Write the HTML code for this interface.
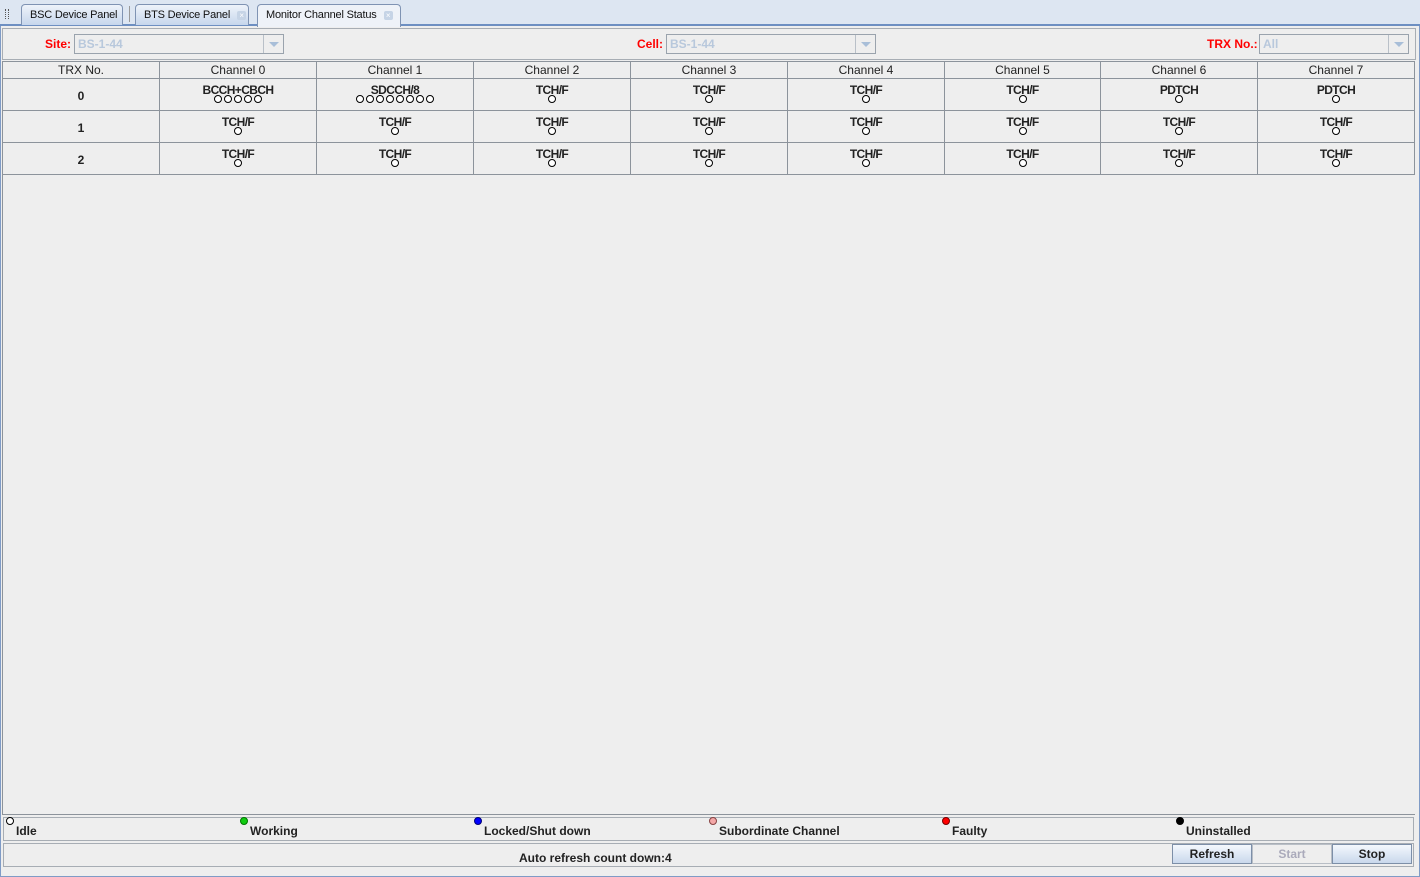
<!DOCTYPE html>
<html><head><meta charset="utf-8"><style>
*{margin:0;padding:0;box-sizing:border-box}
body{width:1420px;height:877px;background:#eeeeee;font-family:"Liberation Sans",Arial,sans-serif;font-size:12px;color:#222;position:relative;overflow:hidden}
.a{position:absolute}
.tabbar{left:0;top:0;width:1420px;height:26px;background:#dde6f2;border-bottom:2px solid #6d8fc2}
.tab{top:4px;height:21px;border:1px solid #7f93b3;border-bottom:none;border-radius:4px 4px 0 0;background:linear-gradient(#eef3fa,#c6d6ec);font-size:11px;padding:4px 0 0 8px;color:#111;white-space:nowrap;letter-spacing:-0.2px}
.x{display:inline-block;width:9px;height:9px;margin-left:7px;background:#c6d4e6;border-radius:2px;color:#fff;font-size:8px;line-height:9px;text-align:center;vertical-align:0}
.lbl{color:#f00;font-weight:bold;font-size:12px}
.cb{height:20px;border:1px solid #9aa3ad;background:#eeeeee;color:#b8c8dc;font-weight:bold;font-size:12px;padding:2px 3px}
.cb i{position:absolute;right:0;top:0;width:20px;height:18px;border-left:1px solid #b9c0c8}
.cb i:after{content:"";position:absolute;left:5px;top:7px;border-left:5px solid transparent;border-right:5px solid transparent;border-top:5px solid #a8bed8}
.c{position:absolute;border-right:1px solid #8c939b;border-bottom:1px solid #8c939b;text-align:center}
.h{font-size:12px;line-height:17px}
.t{position:absolute;left:0;right:0;top:4px;font-size:12px;font-weight:bold;line-height:14px;letter-spacing:-0.6px}
.d{position:absolute;top:16px;left:0;right:0;font-size:0;line-height:0}
.d b{display:inline-block;width:8px;height:8px;border:1px solid #000;border-radius:50%;background:#fff;margin:0 1px}
.n{font-weight:bold;line-height:34px;font-size:12px}
.leg{font-weight:bold;font-size:12px}
.leg b{position:absolute;left:-10px;top:-7px;width:8px;height:8px;border-radius:50%;border:1px solid #000}
.btn{top:844px;height:20px;border:1px solid #7d8fa8;background:linear-gradient(#f4f8fd,#c9d8ec);font-weight:bold;text-align:center;line-height:18px;font-size:12px}
</style></head><body>
<div class="a tabbar"></div>
<div class="a" style="left:5px;top:9px;width:4px;height:10px;border-left:1px dotted #555;border-right:1px dotted #555"></div>
<div class="a tab" style="left:21px;width:102px">BSC Device Panel</div>
<div class="a" style="left:129px;top:6px;width:1px;height:16px;background:#999"></div>
<div class="a tab" style="left:135px;width:114px">BTS Device Panel<span class="x">×</span></div>
<div class="a tab" style="left:257px;width:144px;background:#eef2f8;height:23px">Monitor Channel Status<span class="x">×</span></div>
<div class="a" style="left:0;top:26px;width:1420px;height:851px;border:1px solid #7f9bc6;border-top:none"></div>
<div class="a" style="left:2px;top:28px;width:1414px;height:32px;border:1px solid #a7adb4"></div>
<div class="a lbl" style="left:45px;top:37px">Site:</div>
<div class="a cb" style="left:74px;top:34px;width:210px">BS-1-44<i></i></div>
<div class="a lbl" style="left:637px;top:37px">Cell:</div>
<div class="a cb" style="left:666px;top:34px;width:210px">BS-1-44<i></i></div>
<div class="a lbl" style="left:1207px;top:37px">TRX No.:</div>
<div class="a cb" style="left:1259px;top:34px;width:150px">All<i></i></div>

<div class="a" style="left:2px;top:61px;width:1413px;height:754px;border:1px solid #8c939b;border-right:none;border-bottom:1px solid #8c939b"></div>
<div class="c h" style="left:3px;top:62px;width:157px;height:17px">TRX No.</div>
<div class="c h" style="left:160px;top:62px;width:157px;height:17px">Channel 0</div>
<div class="c h" style="left:317px;top:62px;width:157px;height:17px">Channel 1</div>
<div class="c h" style="left:474px;top:62px;width:157px;height:17px">Channel 2</div>
<div class="c h" style="left:631px;top:62px;width:157px;height:17px">Channel 3</div>
<div class="c h" style="left:788px;top:62px;width:157px;height:17px">Channel 4</div>
<div class="c h" style="left:945px;top:62px;width:156px;height:17px">Channel 5</div>
<div class="c h" style="left:1101px;top:62px;width:157px;height:17px">Channel 6</div>
<div class="c h" style="left:1258px;top:62px;width:157px;height:17px">Channel 7</div>
<div class="c n" style="left:3px;top:79px;width:157px;height:32px">0</div>
<div class="c" style="left:160px;top:79px;width:157px;height:32px"><div class="t">BCCH+CBCH</div><div class="d"><b></b><b></b><b></b><b></b><b></b></div></div>
<div class="c" style="left:317px;top:79px;width:157px;height:32px"><div class="t">SDCCH/8</div><div class="d"><b></b><b></b><b></b><b></b><b></b><b></b><b></b><b></b></div></div>
<div class="c" style="left:474px;top:79px;width:157px;height:32px"><div class="t">TCH/F</div><div class="d"><b></b></div></div>
<div class="c" style="left:631px;top:79px;width:157px;height:32px"><div class="t">TCH/F</div><div class="d"><b></b></div></div>
<div class="c" style="left:788px;top:79px;width:157px;height:32px"><div class="t">TCH/F</div><div class="d"><b></b></div></div>
<div class="c" style="left:945px;top:79px;width:156px;height:32px"><div class="t">TCH/F</div><div class="d"><b></b></div></div>
<div class="c" style="left:1101px;top:79px;width:157px;height:32px"><div class="t">PDTCH</div><div class="d"><b></b></div></div>
<div class="c" style="left:1258px;top:79px;width:157px;height:32px"><div class="t">PDTCH</div><div class="d"><b></b></div></div>
<div class="c n" style="left:3px;top:111px;width:157px;height:32px">1</div>
<div class="c" style="left:160px;top:111px;width:157px;height:32px"><div class="t">TCH/F</div><div class="d"><b></b></div></div>
<div class="c" style="left:317px;top:111px;width:157px;height:32px"><div class="t">TCH/F</div><div class="d"><b></b></div></div>
<div class="c" style="left:474px;top:111px;width:157px;height:32px"><div class="t">TCH/F</div><div class="d"><b></b></div></div>
<div class="c" style="left:631px;top:111px;width:157px;height:32px"><div class="t">TCH/F</div><div class="d"><b></b></div></div>
<div class="c" style="left:788px;top:111px;width:157px;height:32px"><div class="t">TCH/F</div><div class="d"><b></b></div></div>
<div class="c" style="left:945px;top:111px;width:156px;height:32px"><div class="t">TCH/F</div><div class="d"><b></b></div></div>
<div class="c" style="left:1101px;top:111px;width:157px;height:32px"><div class="t">TCH/F</div><div class="d"><b></b></div></div>
<div class="c" style="left:1258px;top:111px;width:157px;height:32px"><div class="t">TCH/F</div><div class="d"><b></b></div></div>
<div class="c n" style="left:3px;top:143px;width:157px;height:32px">2</div>
<div class="c" style="left:160px;top:143px;width:157px;height:32px"><div class="t">TCH/F</div><div class="d"><b></b></div></div>
<div class="c" style="left:317px;top:143px;width:157px;height:32px"><div class="t">TCH/F</div><div class="d"><b></b></div></div>
<div class="c" style="left:474px;top:143px;width:157px;height:32px"><div class="t">TCH/F</div><div class="d"><b></b></div></div>
<div class="c" style="left:631px;top:143px;width:157px;height:32px"><div class="t">TCH/F</div><div class="d"><b></b></div></div>
<div class="c" style="left:788px;top:143px;width:157px;height:32px"><div class="t">TCH/F</div><div class="d"><b></b></div></div>
<div class="c" style="left:945px;top:143px;width:156px;height:32px"><div class="t">TCH/F</div><div class="d"><b></b></div></div>
<div class="c" style="left:1101px;top:143px;width:157px;height:32px"><div class="t">TCH/F</div><div class="d"><b></b></div></div>
<div class="c" style="left:1258px;top:143px;width:157px;height:32px"><div class="t">TCH/F</div><div class="d"><b></b></div></div>

<div class="a" style="left:3px;top:817px;width:1411px;height:24px;border:1px solid #a7adb4"></div>
<div class="a leg" style="left:16px;top:824px"><b style="background:#fff"></b>Idle</div>
<div class="a leg" style="left:250px;top:824px"><b style="background:#1c1;border-color:#070"></b>Working</div>
<div class="a leg" style="left:484px;top:824px"><b style="background:#00f;border-color:#007"></b>Locked/Shut down</div>
<div class="a leg" style="left:719px;top:824px"><b style="background:#f4a8a8;border-color:#844"></b>Subordinate Channel</div>
<div class="a leg" style="left:952px;top:824px"><b style="background:#f00;border-color:#700"></b>Faulty</div>
<div class="a leg" style="left:1186px;top:824px"><b style="background:#000"></b>Uninstalled</div>
<div class="a" style="left:3px;top:843px;width:1411px;height:24px;border:1px solid #a7adb4"></div>
<div class="a leg" style="left:519px;top:851px">Auto refresh count down:4</div>
<div class="a btn" style="left:1172px;width:80px">Refresh</div>
<div class="a btn" style="left:1252px;width:80px;background:#eeeeee;border-color:#b8bec6;color:#aab">Start</div>
<div class="a btn" style="left:1332px;width:80px">Stop</div>
</body></html>
